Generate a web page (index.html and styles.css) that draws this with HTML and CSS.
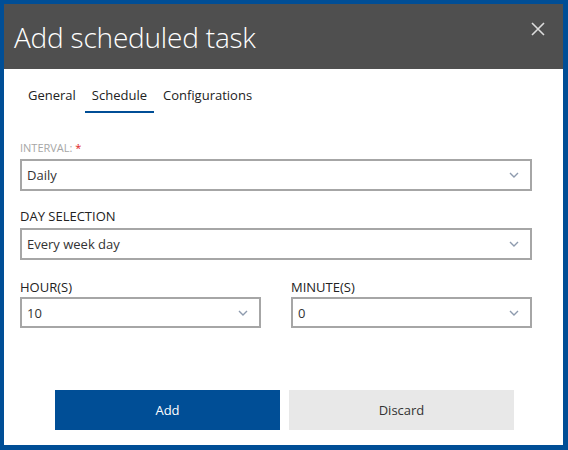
FILE: index.html
```html
<!DOCTYPE html>
<html lang="en">
<head>
    <meta charset="UTF-8">
    <title>Add scheduled task</title>
    <link rel="stylesheet" href="styles.css">
</head>
<body>
    <div class="dialog">
        <div class="dialog-header">
            <h1 class="dialog-title">Add scheduled task</h1>
            <button class="close-btn" aria-label="Close">
                <svg width="14" height="14" viewBox="0 0 14 14">
                    <path d="M1 1 L13 13 M13 1 L1 13" stroke="#dcdcdc" stroke-width="1.6" fill="none"/>
                </svg>
            </button>
        </div>

        <div class="tabs">
            <div class="tab">General</div>
            <div class="tab active">Schedule</div>
            <div class="tab">Configurations</div>
        </div>

        <div class="form">
            <div class="field">
                <label class="field-label muted">INTERVAL: <span class="required">*</span></label>
                <div class="select">
                    <span>Daily</span>
                    <svg class="chevron" width="10" height="6" viewBox="0 0 10 6"><path d="M1 1 L5 5 L9 1" stroke="#8e9bae" stroke-width="1.4" fill="none"/></svg>
                </div>
            </div>

            <div class="field">
                <label class="field-label">DAY SELECTION</label>
                <div class="select">
                    <span>Every week day</span>
                    <svg class="chevron" width="10" height="6" viewBox="0 0 10 6"><path d="M1 1 L5 5 L9 1" stroke="#8e9bae" stroke-width="1.4" fill="none"/></svg>
                </div>
            </div>

            <div class="field-row">
                <div class="field">
                    <label class="field-label">HOUR(S)</label>
                    <div class="select small">
                        <span>10</span>
                        <svg class="chevron" width="10" height="6" viewBox="0 0 10 6"><path d="M1 1 L5 5 L9 1" stroke="#8e9bae" stroke-width="1.4" fill="none"/></svg>
                    </div>
                </div>
                <div class="field">
                    <label class="field-label">MINUTE(S)</label>
                    <div class="select small">
                        <span>0</span>
                        <svg class="chevron" width="10" height="6" viewBox="0 0 10 6"><path d="M1 1 L5 5 L9 1" stroke="#8e9bae" stroke-width="1.4" fill="none"/></svg>
                    </div>
                </div>
            </div>
        </div>

        <div class="actions">
            <button class="btn btn-primary">Add</button>
            <button class="btn btn-secondary">Discard</button>
        </div>
    </div>
</body>
</html>
```

FILE: styles.css
```css
body {
    margin: 0;
    padding: 4px 5px 5px 4px;
    background-color: #004e96;
    font-family: 'Open Sans', 'Noto Sans', sans-serif;
    color: #333333;
}

.dialog {
    background-color: #ffffff;
    height: 441px;
    display: flex;
    flex-direction: column;
}

.dialog-header {
    background-color: #4f4f4f;
    height: 65px;
    display: flex;
    align-items: center;
    justify-content: space-between;
    padding: 0 18px 0 10px;
}

.dialog-title {
    margin: 0;
    font-size: 28px;
    font-weight: 300;
    color: #ffffff;
    letter-spacing: -0.2px;
    padding-top: 1px;
}

.close-btn {
    background: none;
    border: none;
    padding: 0;
    margin-bottom: 16px;
    cursor: pointer;
    display: flex;
}

.tabs {
    display: flex;
    gap: 2px;
    padding: 17px 0 0 17px;
}

.tab {
    font-size: 13px;
    line-height: 18px;
    padding: 0 7px 7px;
    border-bottom: 2px solid transparent;
    color: #222222;
    cursor: pointer;
}

.tab.active {
    border-bottom-color: #004e96;
}

.form {
    padding: 0 31px 0 16px;
    flex: 1;
}

.field {
    display: flex;
    flex-direction: column;
    margin-top: 16px;
}

.field-label {
    font-size: 13px;
    line-height: 18px;
    margin-bottom: 3px;
    color: #222222;
}

.field-label.muted {
    font-size: 11px;
    line-height: 15px;
    color: #a6a6a6;
    margin-bottom: 4px;
}

.form > .field:first-child {
    margin-top: 27px;
}

.required {
    color: #e02020;
}

.select {
    height: 32px;
    box-sizing: border-box;
    border: 2px solid #a6a6a6;
    display: flex;
    align-items: center;
    justify-content: space-between;
    padding: 0 11px 0 5px;
    font-size: 13px;
    color: #333333;
}

.select.small {
    height: 31px;
}

.field-row {
    display: grid;
    grid-template-columns: 1fr 1fr;
    column-gap: 30px;
}

.field-row .field {
    margin-top: 18px;
}

.field-row .field-label {
    margin-bottom: 1px;
}

.actions {
    display: flex;
    gap: 9px;
    padding: 0 0 15px 51px;
}

.btn {
    width: 225px;
    height: 40px;
    border: none;
    font-family: inherit;
    font-size: 13px;
    cursor: pointer;
}

.btn-primary {
    background-color: #004e96;
    color: #ffffff;
}

.btn-secondary {
    background-color: #e8e8e8;
    color: #333333;
}
```
